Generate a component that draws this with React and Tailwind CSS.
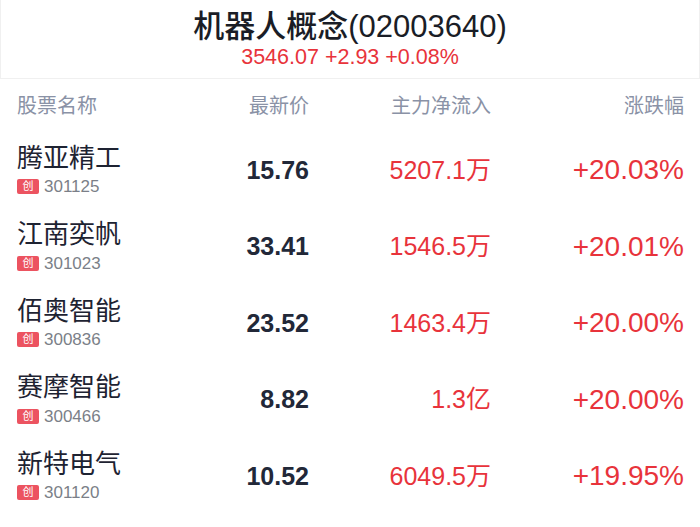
import React from 'react'

const stocks = [
  { name: '腾亚精工', code: '301125', price: '15.76', flow: '5207.1万', pct: '+20.03%' },
  { name: '江南奕帆', code: '301023', price: '33.41', flow: '1546.5万', pct: '+20.01%' },
  { name: '佰奥智能', code: '300836', price: '23.52', flow: '1463.4万', pct: '+20.00%' },
  { name: '赛摩智能', code: '300466', price: '8.82', flow: '1.3亿', pct: '+20.00%' },
  { name: '新特电气', code: '301120', price: '10.52', flow: '6049.5万', pct: '+19.95%' },
]

function StockRow({ s }){
  return (
    <div className="flex items-center h-[76.5px] pl-[17px]">
      <div className="w-[200px]">
        <div className="text-[26px] leading-[30px] text-[#1e2332]">{s.name}</div>
        <div className="flex items-center mt-[3px] h-[22px]">
          <span className="w-[22px] h-[15px] rounded-[2px] bg-[#ec5360] text-white text-[11px] leading-[15px] text-center">创</span>
          <span className="ml-[5px] text-[17px] text-[#7b7f88]">{s.code}</span>
        </div>
      </div>
      <div className="w-[92px] text-right text-[25px] font-semibold text-[#222838]">{s.price}</div>
      <div className="w-[182px] text-right text-[25px] text-[#e8333b]">{s.flow}</div>
      <div className="w-[193px] text-right text-[28px] leading-[32px] text-[#e8333b]">{s.pct}</div>
    </div>
  )
}

export default function App(){
  return (
    <div className="w-[700px] h-[527px] bg-white overflow-hidden" style={{ fontFamily: '"Liberation Sans", "Noto Sans CJK SC", sans-serif' }}>
      <div className="h-[79px] border-x border-b border-[#f0f0f0] flex flex-col items-center">
        <div className="mt-[9px] text-[31px] leading-[35px] font-medium text-[#1a1d26]">机器人概念(02003640)</div>
        <div className="mt-[1px] text-[21.5px] leading-[24px] text-[#e8333b]">3546.07 +2.93 +0.08%</div>
      </div>
      <div className="flex items-center h-[53px] pl-[17px] text-[20px] text-[#8a92a6]">
        <div className="w-[200px]">股票名称</div>
        <div className="w-[92px] text-right">最新价</div>
        <div className="w-[182px] text-right">主力净流入</div>
        <div className="w-[193px] text-right">涨跌幅</div>
      </div>
      {stocks.map(s => <StockRow key={s.code} s={s} />)}
    </div>
  )
}
